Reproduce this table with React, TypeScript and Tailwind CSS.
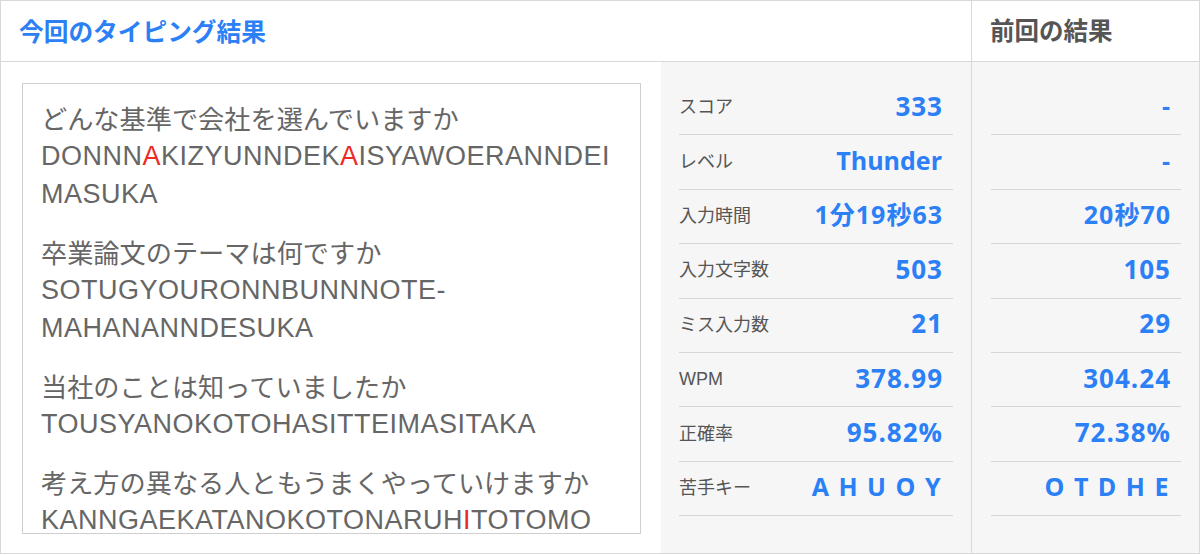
import React from "react";

type Row = { label: string; now: React.ReactNode; prev: React.ReactNode };

function N({ children }: { children: React.ReactNode }) {
  return <span className="mr-[-1px] text-[26px] tracking-[1px]">{children}</span>;
}

function T({ children }: { children: React.ReactNode }) {
  return <span className="mr-[-1px] tracking-[1px]">{children}</span>;
}

const rows: Row[] = [
  { label: "スコア", now: <N>333</N>, prev: "-" },
  { label: "レベル", now: "Thunder", prev: "-" },
  { label: "入力時間", now: <T>1分19秒63</T>, prev: <T>20秒70</T> },
  { label: "入力文字数", now: <N>503</N>, prev: <N>105</N> },
  { label: "ミス入力数", now: <N>21</N>, prev: <N>29</N> },
  { label: "WPM", now: <N>378.99</N>, prev: <N>304.24</N> },
  { label: "正確率", now: <N>95.82%</N>, prev: <N>72.38%</N> },
  {
    label: "苦手キー",
    now: <span className="tracking-[1.5px]">A H U O Y</span>,
    prev: <span className="tracking-[1.5px]">O T D H E</span>,
  },
];

function R({ children }: { children: React.ReactNode }) {
  return <span className="text-[#ee2a24]">{children}</span>;
}

function Ja({ children }: { children: React.ReactNode }) {
  return (
    <div className="whitespace-nowrap text-[26.2px] font-['Noto_Sans_CJK_JP',sans-serif]">
      {children}
    </div>
  );
}

function Ro({ children }: { children: React.ReactNode }) {
  return (
    <div className="whitespace-nowrap text-[27px] tracking-[0.5px] font-['Liberation_Sans','Noto_Sans_CJK_JP',sans-serif]">
      {children}
    </div>
  );
}

function StatRow({ label, value }: { label?: string; value: React.ReactNode }) {
  return (
    <div className="flex h-[54.4px] items-center justify-between border-b border-[#d6d6d6] pb-[3px]">
      <span className="pt-[3px] text-[18px] text-[#555] font-['Liberation_Sans','Noto_Sans_CJK_JP',sans-serif]">
        {label}
      </span>
      <span className="whitespace-nowrap pr-[11px] text-[25px] font-bold text-[#2b80f6] font-['Open_Sans','Noto_Sans_CJK_JP',sans-serif]">
        {value}
      </span>
    </div>
  );
}

export default function App() {
  return (
    <div className="h-[555px] w-[1200px] bg-white">
      <div className="grid h-[554px] grid-cols-[971px_1fr] grid-rows-[61px_1fr] border border-[#d9d9d9]">
        <div className="flex items-center border-b border-r border-[#d9d9d9] pl-[18px] pb-[1px] text-[24.7px] font-bold text-[#2b80f6] font-['Noto_Sans_CJK_JP',sans-serif]">
          今回のタイピング結果
        </div>
        <div className="flex items-center border-b border-[#d9d9d9] pl-[18px] pb-[1px] text-[24.5px] font-bold text-[#555] font-['Noto_Sans_CJK_JP',sans-serif]">
          前回の結果
        </div>

        <div className="flex border-r border-[#d9d9d9]">
          <div className="w-[660px] bg-white pl-[21px] pt-[21px]">
            <div className="h-[451px] w-[619px] overflow-hidden border border-[#cfcfcf] pl-[18px] pt-[15px] leading-[38px] text-[#666]">
              <div className="mb-[20px]">
                <Ja>どんな基準で会社を選んでいますか</Ja>
                <Ro>
                  DONNN<R>A</R>KIZYUNNDEK<R>A</R>ISYAWOERANNDEI
                </Ro>
                <Ro>MASUKA</Ro>
              </div>
              <div className="mb-[20px]">
                <Ja>卒業論文のテーマは何ですか</Ja>
                <Ro>SOTUGYOURONNBUNNNOTE-</Ro>
                <Ro>MAHANANNDESUKA</Ro>
              </div>
              <div className="mb-[20px]">
                <Ja>当社のことは知っていましたか</Ja>
                <Ro>TOUSYANOKOTOHASITTEIMASITAKA</Ro>
              </div>
              <div>
                <Ja>考え方の異なる人ともうまくやっていけますか</Ja>
                <Ro>
                  KANNGAEKATANOKOTONARUH<R>I</R>TOTOMO
                </Ro>
              </div>
            </div>
          </div>
          <div className="flex-1 bg-[#f6f6f6] pl-[18px] pr-[18px] pt-[19px]">
            {rows.map((r) => (
              <StatRow key={r.label} label={r.label} value={r.now} />
            ))}
          </div>
        </div>

        <div className="bg-[#f6f6f6] pl-[19px] pr-[18px] pt-[19px]">
          {rows.map((r) => (
            <StatRow key={r.label} value={r.prev} />
          ))}
        </div>
      </div>
    </div>
  );
}
